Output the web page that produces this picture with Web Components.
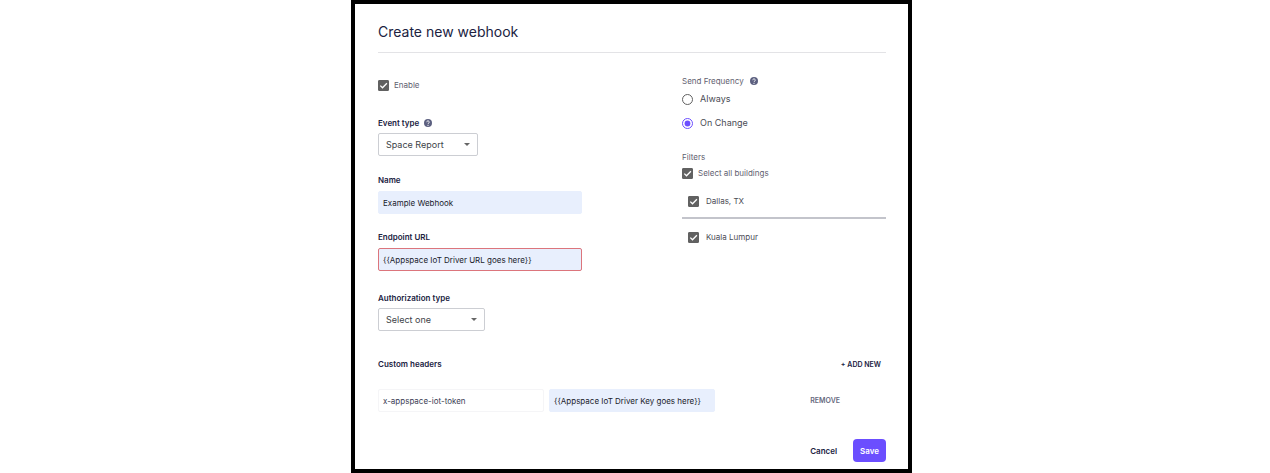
<!DOCTYPE html>
<html lang="en">
<head>
<meta charset="utf-8">
<meta name="viewport" content="width=device-width, initial-scale=1">
<title>Create new webhook</title>
<style>
    body {
        margin: 0;
        padding-right: 7px;
        background: #fff;
        color: #20223f;
        font-family: Inter, "Liberation Sans", sans-serif;
        font-size: 8px;
        line-height: 12px;
    }
</style>
</head>
<body>
<webhook-form></webhook-form>

<script>
class HelpIcon extends HTMLElement {

    constructor() {
        super();
        this.attachShadow({mode: "open"});
        this.shadowRoot.innerHTML = `
            <style>
                :host { display: inline-flex; }
                svg { width: 8px; height: 8px; }
            </style>
            <svg viewBox="0 0 16 16" aria-hidden="true">
                <circle cx="8" cy="8" r="8" fill="#5c6080"/>
                <path d="M5.5 6.3a2.5 2.4 0 1 1 3.8 2Q8 9.100 8 10.200" fill="none" stroke="#fff" stroke-width="1.900"/>
                <circle cx="8" cy="12.600" r="1.200" fill="#fff"/>
            </svg>
        `;
    }

}

// checkbox or radio with its label
class ChoiceBox extends HTMLElement {

    constructor() {
        super();
        this.attachShadow({mode: "open"});
        const type = this.getAttribute("type") || "checkbox";
        const on = this.hasAttribute("checked") ? "checked" : "";
        const tick = type === "checkbox"
            ? `<svg viewBox="0 0 11 11" aria-hidden="true"><path d="M2.300 5.600 4.500 7.800 8.900 3.300" fill="none" stroke="#fff" stroke-width="1.300"/></svg>`
            : `<svg viewBox="0 0 11 11" aria-hidden="true"><circle cx="5.500" cy="5.500" r="2.900" fill="#6b4eff"/></svg>`;
        this.shadowRoot.innerHTML = `
            <style>
                :host { display: block; color: #5f6170; }
                label { display: flex; align-items: center; gap: var(--choice-gap, 5px); }
                .mark { display: grid; }
                .mark > * { grid-area: 1 / 1; width: 11px; height: 11px; margin: 0; }
                svg { pointer-events: none; visibility: hidden; }
                input { appearance: none; box-sizing: border-box; border: 1px solid #616161; border-radius: 1px; background: #fff; }
                input:checked + svg { visibility: visible; }
                input[type=checkbox]:checked { background: #616161; }
                input[type=radio] { border-radius: 50%; }
                input[type=radio]:checked { border-color: #6b4eff; }
            </style>
            <label>
                <span class="mark"><input type="${type}" ${on}>${tick}</span>
                <slot></slot>
            </label>
        `;
        this.input = this.shadowRoot.querySelector("input");
        this.input.addEventListener("change", () => {
            this.dispatchEvent(new Event("change", {bubbles: true}));
        });
    }

    get checked() { return this.input.checked; }
    set checked(value) { this.input.checked = value; }

}

class TextField extends HTMLElement {

    constructor() {
        super();
        this.attachShadow({mode: "open"});
        const label = this.getAttribute("label");
        const hidden = this.hasAttribute("hide-label");
        this.shadowRoot.innerHTML = `
            <style>
                :host { display: block; min-width: 0; }
                label { display: block; margin-bottom: 5px; font-weight: 600; }
                input {
                    display: block;
                    box-sizing: border-box;
                    width: 100%;
                    height: 23px;
                    padding: 0 4px;
                    border: 1px solid #e8effd;
                    border-radius: 2px;
                    background: #e8effd;
                    color: #20222c;
                    font: inherit;
                }
                :host([plain]) input { background: #fff; border-color: #f5f5f7; color: #3c3e55; }
                :host([invalid]) input { border-color: #dc757c; }
            </style>
            ${hidden ? "" : `<label for="field">${label}</label>`}
            <input id="field" type="text" value="${this.getAttribute("value")}" ${hidden ? `aria-label="${label}"` : ""}>
        `;
    }

}

class SelectField extends HTMLElement {

    constructor() {
        super();
        this.attachShadow({mode: "open"});
        this.shadowRoot.innerHTML = `
            <style>
                :host { display: block; }
                .top { display: flex; align-items: center; gap: 5px; margin-bottom: 4px; }
                label { font-weight: 600; }
                .box { display: inline-grid; align-items: center; vertical-align: top; min-width: var(--select-width, 100px); }
                .box > * { grid-area: 1 / 1; }
                select {
                    appearance: none;
                    box-sizing: border-box;
                    width: 100%;
                    height: 23px;
                    padding: 0 24px 0 7px;
                    border: 1px solid #ccced3;
                    border-radius: 2px;
                    background: #fff;
                    color: #3d3f47;
                    font: inherit;
                    font-size: 9px;
                }
                svg { justify-self: end; width: 6px; height: 3px; margin-right: 8px; pointer-events: none; }
            </style>
            <div class="top">
                <label for="field">${this.getAttribute("label")}</label>
                <slot></slot>
            </div>
            <div class="box">
                <select id="field"><option>${this.getAttribute("value")}</option></select>
                <svg viewBox="0 0 6 3" aria-hidden="true"><path d="M0 0h6L3 3z" fill="#666"/></svg>
            </div>
        `;
    }

}

class ActionButton extends HTMLElement {

    constructor() {
        super();
        this.attachShadow({mode: "open"});
        this.shadowRoot.innerHTML = `
            <style>
                :host { display: block; }
                button {
                    display: block;
                    padding: 0;
                    border: 0;
                    background: none;
                    color: inherit;
                    font: inherit;
                    font-weight: 600;
                    cursor: pointer;
                }
                :host([kind=caps]) button { font-size: 7px; line-height: 14px; }
                :host([kind=primary]) button {
                    height: 23px;
                    padding: 0 7px;
                    border-radius: 4px;
                    background: #6b4eff;
                    color: #fff;
                }
            </style>
            <button type="button"><slot></slot></button>
        `;
    }

}

class WebhookForm extends HTMLElement {

    constructor() {
        super();
        this.attachShadow({mode: "open"});
        this.shadowRoot.innerHTML = `
            <style>
                :host {
                    display: block;
                    box-sizing: border-box;
                    max-width: 561px;
                    margin: 0 auto;
                    padding: 18px 22px 7px 23px;
                    border: 4px solid #000;
                    background: #fff;
                }
                h1 {
                    margin: 0;
                    padding-bottom: 10px;
                    border-bottom: 1px solid #e3e3e6;
                    font-size: 14px;
                    font-weight: 400;
                    line-height: 20px;
                }
                h2 { margin: 0; font-size: 8px; font-weight: 600; line-height: 12px; }
                .columns { display: grid; grid-template-columns: 1fr 1fr; column-gap: 100px; padding-top: 22px; }
                .main { padding-top: 4px; }
                .main > * { margin-bottom: 17px; }
                .main .enable { margin-bottom: 26px; }
                .main .event { margin-bottom: 18px; }
                .main .url { margin-bottom: 21px; }
                .main .auth { margin-bottom: 0; --select-width: 107px; }
                fieldset { min-width: 0; margin: 0 0 22px; padding: 0; border: 0; color: #5f6170; }
                legend { display: flex; align-items: center; gap: 6px; padding: 0; margin-bottom: 6px; }
                .filters legend { margin-bottom: 4px; }
                .radio { --choice-gap: 7px; font-size: 9px; color: #4b4c55; }
                .radio + .radio { margin-top: 12px; }
                ul { margin: 16px 0 0; padding: 0; list-style: none; }
                li { padding-left: 6px; }
                li + li { margin-top: 10px; padding-top: 12px; border-top: 2px solid #c3c4cb; }
                li choice-box { --choice-gap: 7px; color: #4b4c55; }
                .headers { display: flex; justify-content: space-between; align-items: flex-start; margin-top: 27px; padding-right: 5px; }
                .row { display: grid; grid-template-columns: repeat(3, 1fr); column-gap: 5px; align-items: center; margin-top: 17px; }
                .remove { justify-self: end; margin-right: 46px; color: #666a80; }
                footer { display: flex; justify-content: flex-end; align-items: center; gap: 16px; margin-top: 27px; }
            </style>
            <h1>Create new webhook</h1>
            <div class="columns">
                <div class="main">
                    <choice-box class="enable" checked>Enable</choice-box>
                    <select-field class="event" label="Event type" value="Space Report"><help-icon></help-icon></select-field>
                    <text-field label="Name" value="Example Webhook"></text-field>
                    <text-field class="url" label="Endpoint URL" value="{{Appspace IoT Driver URL goes here}}" invalid></text-field>
                    <select-field class="auth" label="Authorization type" value="Select one"></select-field>
                </div>
                <div class="side">
                    <fieldset>
                        <legend>Send Frequency <help-icon></help-icon></legend>
                        <choice-box class="radio" type="radio">Always</choice-box>
                        <choice-box class="radio" type="radio" checked>On Change</choice-box>
                    </fieldset>
                    <fieldset class="filters">
                        <legend>Filters</legend>
                        <choice-box class="all" checked>Select all buildings</choice-box>
                        <ul>
                            <li><choice-box checked>Dallas, TX</choice-box></li>
                            <li><choice-box checked>Kuala Lumpur</choice-box></li>
                        </ul>
                    </fieldset>
                </div>
            </div>
            <div class="headers">
                <h2>Custom headers</h2>
                <action-button kind="caps">+ ADD NEW</action-button>
            </div>
            <div class="row">
                <text-field label="Header name" hide-label plain value="x-appspace-iot-token"></text-field>
                <text-field label="Header value" hide-label value="{{Appspace IoT Driver Key goes here}}"></text-field>
                <action-button class="remove" kind="caps">REMOVE</action-button>
            </div>
            <footer>
                <action-button>Cancel</action-button>
                <action-button kind="primary">Save</action-button>
            </footer>
        `;
        this.bindRadios();
        this.bindFilters();
    }

    // each radio sits in its own shadow root, so the group is kept here
    bindRadios() {
        const radios = [...this.shadowRoot.querySelectorAll(".radio")];
        radios.forEach(radio => radio.addEventListener("change", () => {
            radios.forEach(other => other.checked = other === radio);
        }));
    }

    bindFilters() {
        const all = this.shadowRoot.querySelector(".all");
        const items = [...this.shadowRoot.querySelectorAll("li choice-box")];
        all.addEventListener("change", () => items.forEach(item => item.checked = all.checked));
        items.forEach(item => item.addEventListener("change", () => {
            all.checked = items.every(i => i.checked);
        }));
    }

}

customElements.define("help-icon", HelpIcon);
customElements.define("choice-box", ChoiceBox);
customElements.define("text-field", TextField);
customElements.define("select-field", SelectField);
customElements.define("action-button", ActionButton);
customElements.define("webhook-form", WebhookForm);
</script>
</body>
</html>
